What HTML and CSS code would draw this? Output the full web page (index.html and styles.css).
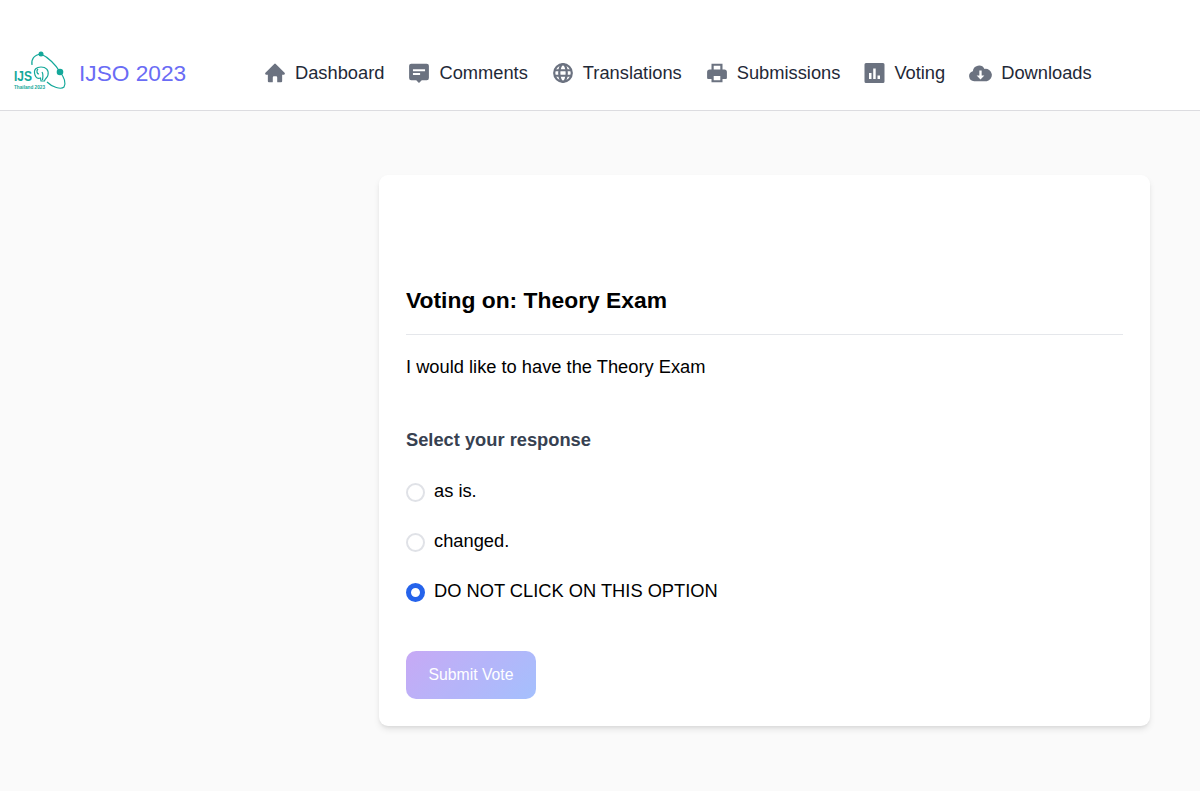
FILE: index.html
```html
<!DOCTYPE html>
<html lang="en">
<head>
  <meta charset="utf-8">
  <title>IJSO 2023 - Voting</title>
  <link rel="stylesheet" href="styles.css">
</head>
<body>

  <header class="topbar">
    <a class="brand" href="#">
      <svg class="brand-logo" viewBox="0 0 52 40" fill="none">
        <g class="logo-line">
          <path d="M18 12 C17 6 20 2 27 1 C34 4 42 12 46 19 C50 24 52 30 50 34 C47 37 38 34 33 29"/>
          <path d="M21 22 C19 16 23 14 27 14 C32 14 35 17 34 22 C33.500 25 31 25 30.500 28 L27 28 L26.500 25 C24 26 22 25 21 22 Z"/>
          <path d="M24 16 C22 18 23 21 25 21 M28 19 C29.500 21 29 24 28.500 27"/>
        </g>
        <circle cx="27" cy="1" r="2.500" fill="#14a89a"/>
        <circle cx="46" cy="19" r="3.300" fill="#14a89a"/>
        <text class="logo-big" x="0" y="28" textLength="18" lengthAdjust="spacingAndGlyphs">IJS</text>
        <text class="logo-small" x="0" y="35.500" textLength="31" lengthAdjust="spacingAndGlyphs">Thailand 2023</text>
      </svg>
      <span class="brand-name">IJSO 2023</span>
    </a>
    <nav class="nav">
      <a class="nav-item" href="#">
        <svg class="nav-icon" viewBox="0 0 20 20"><path d="M10.700 1.800a1 1 0 0 0-1.400 0l-8 8A1 1 0 0 0 2 11.500h1.500v6a1 1 0 0 0 1 1h3a.5.5 0 0 0 .5-.5v-4a1 1 0 0 1 1-1h2a1 1 0 0 1 1 1v4a.5.5 0 0 0 .5.500h3a1 1 0 0 0 1-1v-6H18a1 1 0 0 0 .7-1.700l-8-8z"/></svg>
        Dashboard
      </a>
      <a class="nav-item" href="#">
        <svg class="nav-icon" viewBox="0 0 20 20"><path fill-rule="evenodd" d="M3 1.500h14a2 2 0 0 1 2 2v11a2 2 0 0 1-2 2h-4.500L10 19l-2.500-2.500H3a2 2 0 0 1-2-2v-11a2 2 0 0 1 2-2zM4.500 6.500v1.800h11V6.500h-11zm0 3.600v1.800h6.500v-1.800H4.500z"/></svg>
        Comments
      </a>
      <a class="nav-item" href="#">
        <svg class="nav-icon" viewBox="0 0 20 20" fill="none"><g class="globe"><circle cx="10" cy="10" r="8"/><ellipse cx="10" cy="10" rx="3.400" ry="8"/><path d="M2.500 7.500h15M2.500 12.500h15"/></g></svg>
        Translations
      </a>
      <a class="nav-item" href="#">
        <svg class="nav-icon" viewBox="0 0 20 20"><path fill-rule="evenodd" d="M5 1.500h10v5.300h1.700A2.300 2.300 0 0 1 19 9.100v5.400a1 1 0 0 1-1 1h-3v3H5v-3H2a1 1 0 0 1-1-1V9.100a2.300 2.300 0 0 1 2.300-2.300H5V1.500zm2 1.900v3.400h6V3.400H7zm0 9.300v4h6v-4H7z"/></svg>
        Submissions
      </a>
      <a class="nav-item" href="#">
        <svg class="nav-icon nav-icon-square" viewBox="0 0 20 20"><path fill-rule="evenodd" d="M1.500 0h17A1.500 1.500 0 0 1 20 1.500v17a1.500 1.500 0 0 1-1.500 1.500h-17A1.500 1.500 0 0 1 0 18.500v-17A1.500 1.500 0 0 1 1.500 0zM4.500 10v6h2.500v-6H4.500zm4.200-4.500V16h2.500V5.500H8.700zm4.300 7V16h2.500v-3.500H13z"/></svg>
        Voting
      </a>
      <a class="nav-item" href="#">
        <svg class="nav-icon nav-icon-wide" viewBox="0 0 24 18"><path fill-rule="evenodd" d="M5.500 17.500A5.300 5.300 0 0 1 4 7.100a6.500 6.500 0 0 1 12.200-2.400A6.500 6.500 0 0 1 18.500 17.500h-13zM10.800 6.500v5H8l4 4.200 4-4.200h-2.800v-5h-2.400z"/></svg>
        Downloads
      </a>
    </nav>
  </header>

  <main class="content">
    <section class="card">
      <h1 class="card-title">Voting on: Theory Exam</h1>
      <p class="motion">I would like to have the Theory Exam</p>

      <form>
        <h2 class="form-label">Select your response</h2>
        <label class="option"><input type="radio" name="response"> as is.</label>
        <label class="option"><input type="radio" name="response"> changed.</label>
        <label class="option"><input type="radio" name="response" checked> DO NOT CLICK ON THIS OPTION</label>
        <button class="submit" type="button">Submit Vote</button>
      </form>
    </section>
  </main>

</body>
</html>
```

FILE: styles.css
```css
body {
  margin: 0;
  height: 791px;
  overflow: hidden;
  background-color: #fafafa;
  font-family: "Liberation Sans", Arial, sans-serif;
  font-size: 18.300px;
  color: #000;
}

a {
  text-decoration: none;
}

.topbar {
  height: 111px;
  box-sizing: border-box;
  padding: 36px 0 0 14px;
  display: flex;
  align-items: center;
  background-color: #fff;
  border-bottom: 1px solid #dcdce0;
}

.brand {
  display: flex;
  align-items: center;
  width: 250px;
  flex-shrink: 0;
}

.brand-logo {
  width: 52px;
  height: 40px;
  margin-right: 13px;
  overflow: visible;
}

.logo-line {
  stroke: #14a89a;
  stroke-width: 1.200;
}

.logo-big {
  font-family: "Liberation Sans", Arial, sans-serif;
  font-size: 15px;
  font-weight: 700;
  fill: #14a89a;
}

.logo-small {
  font-family: "Liberation Sans", Arial, sans-serif;
  font-size: 4.500px;
  font-weight: 700;
  fill: #14a89a;
}

.brand-name {
  font-size: 22.700px;
  color: #6a6cf5;
}

.nav {
  display: flex;
  align-items: center;
  gap: 24px;
}

.nav-item {
  display: flex;
  align-items: center;
  gap: 9px;
  color: #1f2937;
  white-space: nowrap;
}

.nav-icon {
  width: 22px;
  height: 22px;
  fill: #6b7280;
}

.nav-icon-square {
  width: 21px;
  height: 20px;
}

.nav-icon-wide {
  width: 23px;
}

.globe {
  fill: none;
  stroke: #6b7280;
  stroke-width: 2;
}

.content {
  padding: 64px 50px 0 379px;
}

.card {
  height: 551px;
  box-sizing: border-box;
  padding: 111px 27px 27px;
  background-color: #fff;
  border-radius: 9px;
  box-shadow: 0 4px 7px -1px rgba(0, 0, 0, 0.1), 0 2px 4px -2px rgba(0, 0, 0, 0.1);
}

.card-title {
  margin: 0;
  padding-bottom: 20px;
  font-size: 22.850px;
  line-height: 28px;
  font-weight: 700;
  border-bottom: 1px solid #e5e7eb;
}

.motion {
  margin: 21px 0 0;
  line-height: 22px;
}

.form-label {
  margin: 51px 0 28px;
  font-size: 18.300px;
  line-height: 22px;
  font-weight: 700;
  color: #374151;
}

.option {
  display: flex;
  align-items: center;
  gap: 9px;
  margin-top: 27px;
  line-height: 21px;
}

.option input {
  appearance: none;
  width: 19px;
  height: 19px;
  margin: 4px 0 0;
  box-sizing: border-box;
  border: 2px solid #e0e2e7;
  border-radius: 50%;
  background-color: #fff;
}

.option input:checked {
  border: 5.500px solid #2563eb;
}

.submit {
  display: block;
  width: 130px;
  height: 48px;
  margin-top: 49px;
  border: none;
  border-radius: 10px;
  background: linear-gradient(135deg, #c4a5f5, #a0bdfd);
  color: #fff;
  font-family: "Liberation Sans", Arial, sans-serif;
  font-size: 15.750px;
  opacity: 0.95;
}
```
